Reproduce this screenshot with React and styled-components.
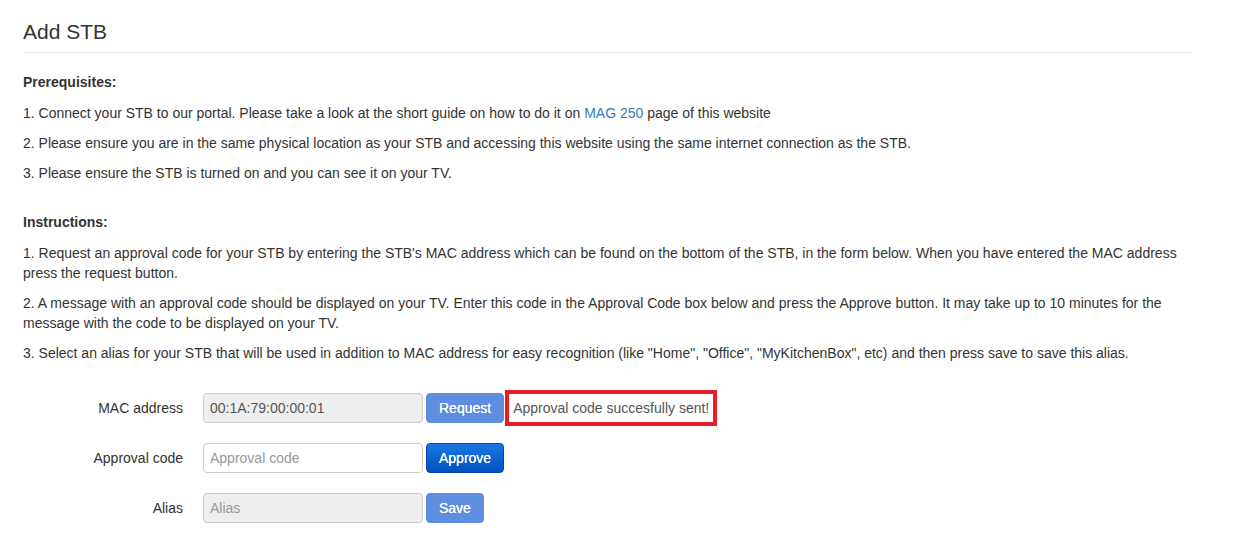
import React from "react";
import styled, { createGlobalStyle } from "styled-components";

const Global = createGlobalStyle`
  html, body { margin: 0; padding: 0; background: #fff; }
  body {
    font-family: "Liberation Sans", Arial, Helvetica, sans-serif;
    font-size: 14px;
    line-height: 20px;
    color: #333;
  }
`;

const Page = styled.div`
  width: 1170px;
  padding-left: 23px;
`;

const Header = styled.h1`
  margin: 20px 0 0;
  padding-bottom: 9px;
  border-bottom: 1px solid #e5e5e5;
  font-size: 21px;
  line-height: 23px;
  font-weight: 400;
  color: #333;
`;

const Section = styled.section`
  margin-top: ${(p) => p.$top}px;
`;

const Title = styled.p`
  margin: 0 0 11px;
  font-weight: 700;
`;

const Item = styled.p`
  margin: 0 0 10px;
`;

const Link = styled.a`
  color: #337ab7;
  text-decoration: none;
`;

const Form = styled.form`
  margin-top: 30px;
  display: flex;
  flex-direction: column;
  gap: 20px;
`;

const Row = styled.div`
  display: flex;
  align-items: center;
  height: 30px;
`;

const Label = styled.label`
  width: 160px;
  margin-right: 20px;
  text-align: right;
  color: #333;
`;

const Input = styled.input`
  box-sizing: border-box;
  width: 220px;
  height: 30px;
  padding: 5px 6px;
  border: 1px solid #ccc;
  border-radius: 4px;
  background: ${(p) => (p.disabled ? "#eee" : "#fff")};
  font-family: inherit;
  font-size: 14px;
  color: #555;
  outline: none;
  &::placeholder { color: #999; }
`;

const Button = styled.button`
  box-sizing: border-box;
  height: 30px;
  margin-left: 3px;
  padding: 0 12px;
  border-radius: 4px;
  font-family: inherit;
  font-size: 14px;
  font-weight: 400;
  color: #fff;
  text-shadow: 0 0 0.4px #fff;
  cursor: pointer;
  border: 1px solid ${(p) => (p.$muted ? "#5d8de0" : "#0047b0")};
  background: ${(p) =>
    p.$muted ? "#5e8ee0" : "linear-gradient(#1a78e2, #0050c2)"};
`;

const Message = styled.span`
  box-sizing: border-box;
  height: 36px;
  margin-left: 1px;
  padding: 0 4px 0 4px;
  display: flex;
  align-items: center;
  border: 4px solid #ec1c24;
  color: #555;
`;

export default function App() {
  return (
    <>
      <Global />
      <Page>
        <Header>Add STB</Header>
        <Section $top={19}>
          <Title>Prerequisites:</Title>
          <Item>
            1. Connect your STB to our portal. Please take a look at the short guide on how to do it on{" "}
            <Link href="#">MAG 250</Link> page of this website
          </Item>
          <Item>
            2. Please ensure you are in the same physical location as your STB and accessing this website using the same internet connection as the STB.
          </Item>
          <Item>3. Please ensure the STB is turned on and you can see it on your TV.</Item>
        </Section>
        <Section $top={29}>
          <Title>Instructions:</Title>
          <Item>
            1. Request an approval code for your STB by entering the STB's MAC address which can be found on the bottom of the STB, in the form below. When you have entered the MAC address press the request button.
          </Item>
          <Item>
            2. A message with an approval code should be displayed on your TV. Enter this code in the Approval Code box below and press the Approve button. It may take up to 10 minutes for the message with the code to be displayed on your TV.
          </Item>
          <Item>
            3. Select an alias for your STB that will be used in addition to MAC address for easy recognition (like "Home", "Office", "MyKitchenBox", etc) and then press save to save this alias.
          </Item>
        </Section>
        <Form onSubmit={(e) => e.preventDefault()}>
          <Row>
            <Label>MAC address</Label>
            <Input disabled value="00:1A:79:00:00:01" readOnly />
            <Button type="button" $muted>Request</Button>
            <Message>Approval code succesfully sent!</Message>
          </Row>
          <Row>
            <Label>Approval code</Label>
            <Input placeholder="Approval code" />
            <Button type="button">Approve</Button>
          </Row>
          <Row>
            <Label>Alias</Label>
            <Input disabled placeholder="Alias" />
            <Button type="button" $muted>Save</Button>
          </Row>
        </Form>
      </Page>
    </>
  );
}
